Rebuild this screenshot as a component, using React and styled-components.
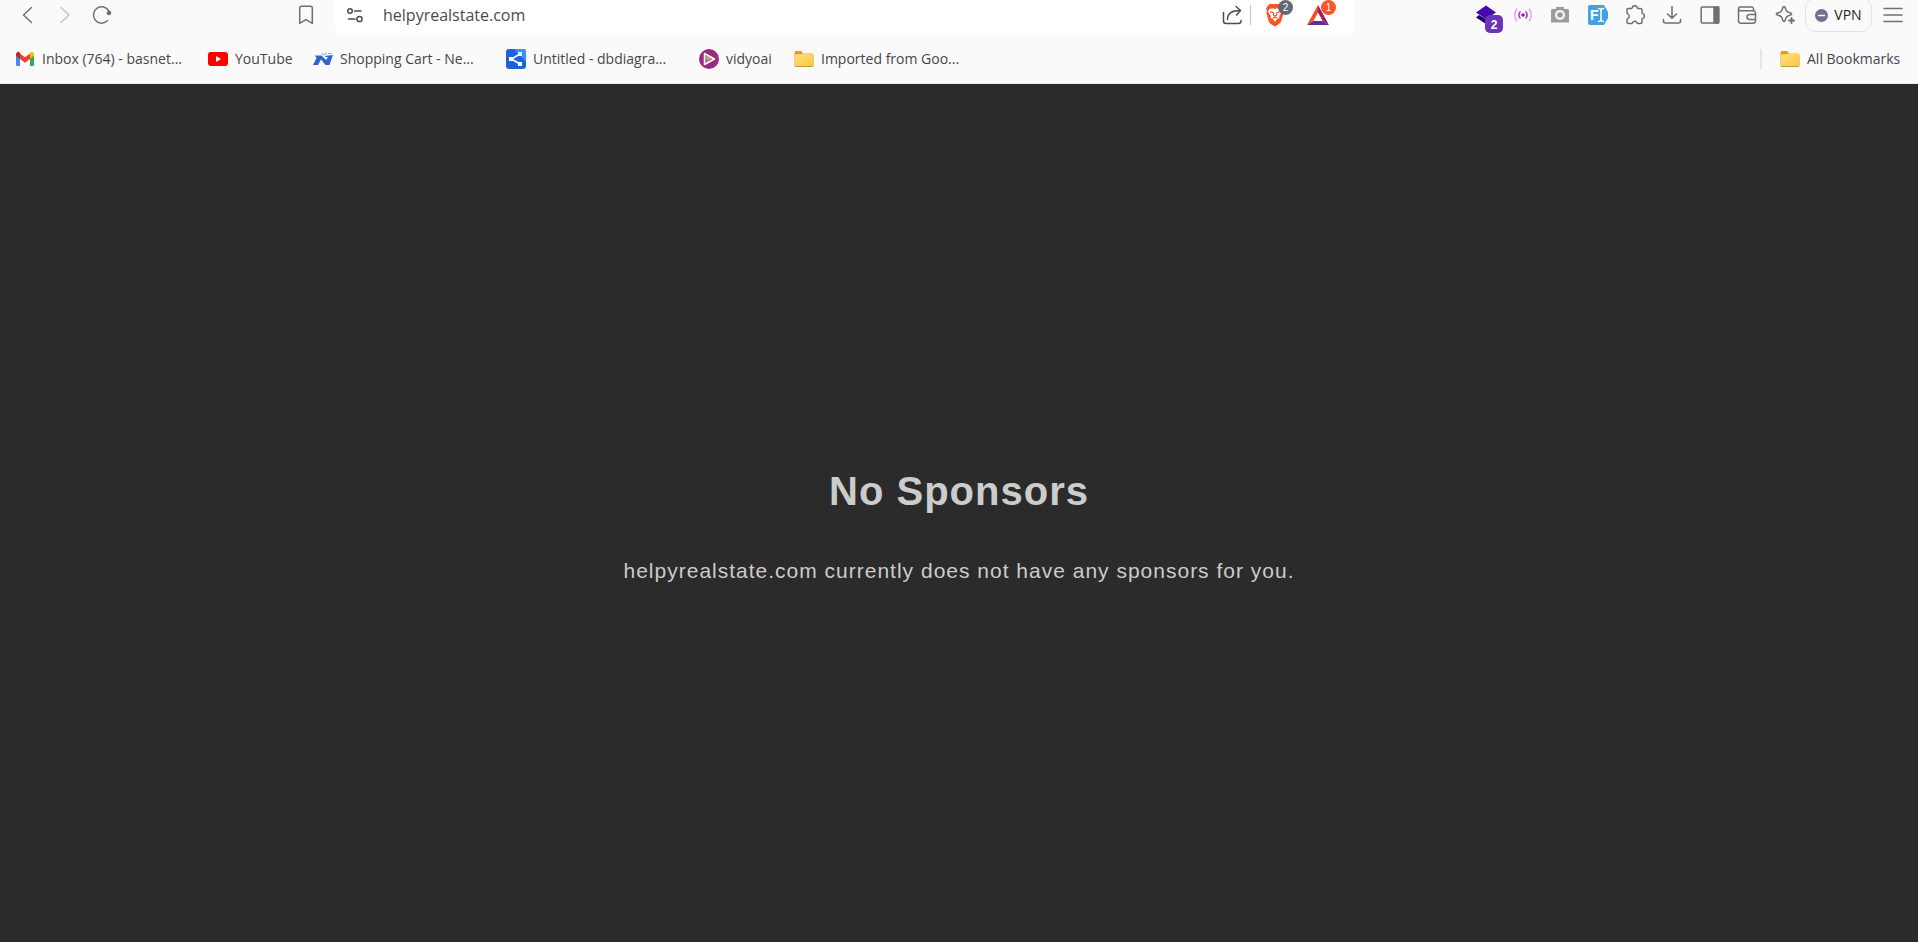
import React from 'react';
import styled, { createGlobalStyle } from 'styled-components';

const GlobalStyle = createGlobalStyle`
  * { box-sizing: border-box; }
  body { margin: 0; background: #2b2b2b; }
`;

const uiFont = '"Open Sans", "Noto Sans", sans-serif';

const Page = styled.div`
  display: flex;
  flex-direction: column;
  min-height: 100vh;
  font-family: ${uiFont};
`;

const Chrome = styled.header`
  background: #fafafa;
  border-bottom: 1px solid #ebebeb;
  overflow: hidden;
`;

const Toolbar = styled.div`
  display: flex;
  height: 35px;
`;

const NavGroup = styled.nav`
  display: flex;
  align-items: center;
  width: 335px;
  height: 30px;
  padding: 0 11px 0 9px;
`;

const IconButton = styled.button`
  position: relative;
  display: flex;
  align-items: center;
  justify-content: center;
  flex: none;
  width: 37px;
  height: 30px;
  margin: 0;
  margin-left: ${(p) => (p.$push ? 'auto' : '0')};
  padding: 0;
  border: 0;
  background: none;
  color: ${(p) => p.$color || '#6f7073'};

  svg { display: block; }
`;

const AddressBar = styled.div`
  display: flex;
  flex: 1;
  min-width: 0;
  height: 35px;
  padding: 0 19px 5px 1px;
  align-items: center;
  border-radius: 0 0 12px 12px;
  background: #fff;
`;

const AddressInput = styled.input`
  flex: 1;
  min-width: 0;
  height: 26px;
  margin: 0 0 0 10px;
  padding: 0;
  border: 0;
  outline: 0;
  background: none;
  color: #4a4b50;
  font: 400 16px/26px ${uiFont};
`;

const Divider = styled.span`
  flex: none;
  width: ${(p) => p.$width || 1}px;
  height: 20px;
  background: ${(p) => p.$color || '#c4c4c6'};
`;

const Shields = styled.div`
  display: flex;
  gap: 6px;
  margin-left: 5px;
`;

const Badge = styled.span`
  position: absolute;
  top: 0;
  right: 0;
  width: 15px;
  height: 15px;
  border-radius: 8px;
  background: ${(p) => p.$bg};
  color: #fff;
  font-size: 10px;
  line-height: 16px;
  text-align: center;
`;

const CountBadge = styled(Badge)`
  top: 15px;
  right: 1px;
  width: 18px;
  height: 18px;
  border-radius: 5px;
  font-size: 12px;
  font-weight: 600;
  line-height: 20px;
`;

const ToolGroup = styled.div`
  display: flex;
  align-items: center;
  justify-content: flex-end;
  gap: 2px;
  width: 563px;
  height: 30px;
  padding-right: 7px;
`;

const Extensions = styled.div`
  display: flex;
  justify-content: space-between;
  width: 336px;
`;

const VpnButton = styled.button`
  display: flex;
  align-items: center;
  justify-content: center;
  gap: 6px;
  flex: none;
  width: 67px;
  height: 34px;
  padding: 0;
  border: 1px solid #e3e3ea;
  border-radius: 10px;
  background: none;
  color: #1d1f25;
  font: 400 14px/20px ${uiFont};
`;

const BookmarkBar = styled.nav`
  display: flex;
  align-items: center;
  gap: 21px;
  height: 48px;
  padding: 0 15px;
`;

const Bookmark = styled.a`
  display: flex;
  align-items: center;
  gap: 7px;
  flex: none;
  color: #45464c;
  font-size: 14px;
  line-height: 20px;
  text-decoration: none;
  white-space: nowrap;

  svg { display: block; flex: none; }
`;

const BookmarkLabel = styled.span`
  width: ${(p) => (p.$width ? `${p.$width}px` : 'auto')};
`;

const BookmarkEnd = styled.div`
  display: flex;
  align-items: center;
  gap: 18px;
  margin-left: auto;
`;

const Content = styled.main`
  display: flex;
  flex: 1;
  flex-direction: column;
  align-items: center;
  justify-content: center;
  gap: 45px;
  padding-top: 25px;
  background: #2b2b2b;
  color: #ccc;
  font-family: "Liberation Sans", Arial, sans-serif;
  text-align: center;
`;

const Title = styled.h1`
  margin: 0;
  font-size: 40px;
  line-height: 46px;
  letter-spacing: 1px;
`;

const Message = styled.p`
  margin: 0;
  font-size: 21px;
  line-height: 24px;
  letter-spacing: 1px;
`;

const Icon = ({ size = 20, width, height, children, stroke = 'currentColor', sw = 1.5 }) => (
  <svg
    width={width || size}
    height={height || size}
    viewBox={`0 0 ${width || size} ${height || size}`}
    fill="none"
    stroke={stroke}
    strokeWidth={sw}
    strokeLinecap="round"
    strokeLinejoin="round"
    aria-hidden="true"
  >
    {children}
  </svg>
);

const BackIcon = () => <Icon><path d="M13.5 2.5 5.5 10l8 7.500" /></Icon>;
const ForwardIcon = () => <Icon><path d="M6 2.500 14 10l-8 7.500" /></Icon>;
const ReloadIcon = () => (
  <Icon>
    <path d="M15.600 15.600A8.200 8.200 0 1 1 17 6.300" />
    <circle cx="17" cy="8" r="2.300" fill="currentColor" stroke="none" />
  </Icon>
);
const BookmarkIcon = () => (
  <Icon><path d="M3.700 3a1.700 1.700 0 0 1 1.700-1.700h9.200A1.700 1.700 0 0 1 16.300 3v15.400L10 14.600l-6.300 3.800z" /></Icon>
);
const SiteIcon = () => (
  <Icon>
    <circle cx="5" cy="6" r="2.300" />
    <path d="M9.500 6H16M3.500 14h6.500" />
    <circle cx="14.500" cy="14" r="2.600" />
  </Icon>
);
const ShareIcon = () => (
  <Icon>
    <path d="M1.500 7.500V16A2.500 2.500 0 0 0 4 18.500h12.500a2.500 2.500 0 0 0 2.500-2.500v-.5M5.500 14.500c0-6 4-9 12.500-9M14 1.500l4.500 4-4 4.500" />
  </Icon>
);
const BraveIcon = () => (
  <Icon width={20} height={24} stroke="none">
    <path fill="#fb542b" d="M4.500 1h11l2.300 2.600 1.200 2-1 2.400.6 2-2.400 8.500c-.8 2-3.200 3.200-6.200 5.100-3-1.900-5.400-3.100-6.200-5.100L1.400 10 2 8 1 5.600l1.200-2z" />
    <path fill="#fff" d="m4.200 6 3.600-.7L10 6l2.200-.7 3.600.7 1.200 2.800-2.800 4.200.2 2-2.200 1-2.200 2.700L7.800 16l-2.200-1 .2-2L3 8.800z" />
    <path stroke="#fb542b" strokeWidth="1.200" d="m5.500 8.900 2.500.7M14.500 8.900l-2.500.7M8.700 10.500 8.300 12l1.700 1 1.700-1-.4-1.500M8 15l2-1 2 1" />
  </Icon>
);
const RewardsIcon = () => (
  <Icon width={22} height={20} stroke="none">
    <path fill="#ff4724" d="M11 0 0 20l6.300-4L11 7.600z" />
    <path fill="#9e1f63" d="M11 0v7.600l4.700 8.400 6.300 4z" />
    <path fill="#662d91" d="M6.300 16 0 20h22l-6.300-4z" />
  </Icon>
);
const LayersIcon = () => (
  <Icon size={20} stroke="none">
    <path fill="#240070" d="M0 12.500 3 10l7 4 7-4 3 2.500L10 19z" />
    <path fill="#4608ad" d="M10 .5 20 7.500 10 14 0 7.500z" />
  </Icon>
);
const BroadcastIcon = () => (
  <Icon width={18} height={14} sw={1.6}>
    <circle cx="9" cy="7" r="1.800" fill="#a318b0" stroke="none" />
    <path stroke="#b43fc0" d="M6 4a5 5 0 0 0 0 6M12 4a5 5 0 0 1 0 6" />
    <path stroke="#e3a3ea" d="M2.700 1.300a9.500 9.500 0 0 0 0 11.400M15.300 1.300a9.500 9.500 0 0 1 0 11.400" />
  </Icon>
);
const CameraIcon = () => (
  <Icon stroke="none">
    <path fill="#9b9b9b" fillRule="evenodd" d="M3 4h3V2h8v2h3.500A1.500 1.500 0 0 1 19 5.500v12H1v-12A1.500 1.500 0 0 1 3 4z" />
    <circle cx="10" cy="10" r="5" fill="#fafafa" />
    <circle cx="10" cy="10" r="2.800" fill="#9b9b9b" />
  </Icon>
);
const FontIcon = () => (
  <Icon stroke="none">
    <path fill="#43a3e0" d="M2 0h14l4 7v6l-4 7H2a2 2 0 0 1-2-2V2a2 2 0 0 1 2-2z" />
    <text x="2" y="15" fill="#fff" fontFamily="Liberation Sans, sans-serif" fontSize="14" fontWeight="700">F</text>
    <path stroke="#fff" strokeWidth="1.500" d="M10.500 3.500c2 0 2.500.5 2.500 2 0-1.500.5-2 2.500-2M13 5v10M10.500 16.500c2 0 2.500-.5 2.500-2 0 1.500.5 2 2.500 2" />
  </Icon>
);
const PuzzleIcon = () => (
  <Icon>
    <path d="M3 3.500h3.500c.3 0 .5-.2.6-.6a2.700 2.700 0 0 1 5.300 0c0 .4.300.6.600.6h2.500a1.500 1.500 0 0 1 1.500 1.500v2.700c0 .4.300.6.600.700a2.600 2.600 0 0 1 0 5c-.4 0-.6.300-.6.700V17a1.500 1.500 0 0 1-1.500 1.500h-2.700c-.4 0-.6-.3-.7-.6a2.500 2.500 0 0 0-4.700 0c-.1.300-.4.600-.8.600H3.500A1.500 1.500 0 0 1 2 17v-2.600c0-.4.300-.7.600-.800a2.500 2.500 0 0 0 0-4.700C2.300 8.700 2 8.500 2 8.100V4.500a1 1 0 0 1 1-1z" />
  </Icon>
);
const DownloadIcon = () => (
  <Icon><path d="M10 1.500V13M5.500 9 10 13.300 14.500 9M1.500 14.500v1.500a2 2 0 0 0 2 2h13a2 2 0 0 0 2-2v-1.500" /></Icon>
);
const SidebarIcon = () => (
  <Icon>
    <rect x="1.200" y="2" width="17.600" height="16" rx="1" />
    <path d="M14 2h4.500v16H14z" fill="currentColor" />
  </Icon>
);
const WalletIcon = () => (
  <Icon>
    <path d="M1.500 4v12A2.200 2.200 0 0 0 3.700 18.200h12.600a2.200 2.200 0 0 0 2.200-2.200V8a2.200 2.200 0 0 0-2.200-2.200H3.500a1.900 1.900 0 0 1 0-3.800h11a2 2 0 0 1 2 2v1.500" />
    <path d="M18.500 9.500h-6a2.500 2.500 0 0 0 0 5h6" />
  </Icon>
);
const SparkleIcon = () => (
  <Icon>
    <path d="M9 1.500c.8 0 1 .5 1.200 1.300.8 3.200 1.600 4.200 5.300 5.200 1.600.4 1.600 1.600 0 2-3.700 1-4.500 2-5.300 5.200-.4 1.700-2 1.700-2.400 0C7 12 6.200 11 2.500 10 .9 9.600.9 8.400 2.500 8 6.200 7 7 6 7.800 2.800 8 2 8.200 1.500 9 1.500z" />
    <path d="M16.500 13v5M14 15.500h5" strokeWidth="2" />
  </Icon>
);
const MenuIcon = () => <Icon><path d="M1 3.500h18M1 10h18M1 16.500h18" /></Icon>;
const VpnIcon = () => (
  <Icon size={13} stroke="none">
    <circle cx="6.500" cy="6.500" r="6.500" fill="#6b7094" />
    <path d="M3.500 6.500h6" stroke="#fff" strokeWidth="1.500" />
  </Icon>
);

const MailLogo = () => (
  <Icon stroke="none">
    <path fill="#4285f4" d="M1 5v10.700A1.300 1.300 0 0 0 2.300 17H5V8.500z" />
    <path fill="#34a853" d="M15 17h2.700a1.300 1.300 0 0 0 1.300-1.300V5l-4 3.500z" />
    <path fill="#fbbc04" d="M15 4.500V10l4-3.200V5.200c0-2-2.300-3-3.700-1.900z" />
    <path fill="#ea4335" d="M5 10V4.500l5 3.800 5-3.800V10l-5 3.800z" />
    <path fill="#c5221f" d="M1 5.200v1.600L5 10V4.500l-.3-1.200C3.300 2.200 1 3.200 1 5.200z" />
  </Icon>
);
const YouTubeLogo = () => (
  <Icon stroke="none">
    <rect y="3" width="20" height="14" rx="3" fill="#f00" />
    <path fill="#fff" d="m8 7 5 3-5 3z" />
  </Icon>
);
const CartLogo = () => (
  <Icon stroke="none">
    <path fill="#3264cf" d="M0 16 3.500 9 2 6.500h6.500L13 11l2-3h-3l1-1.200 7-.8-3.500 10h-4L8 10.500 5 16z" />
    <path stroke="#8fabec" strokeWidth="1.200" d="m9.500 5 1.500 1M12.500 4l.5 1.500M15.500 4.500h3" />
  </Icon>
);
const DiagramLogo = () => (
  <Icon stroke="none">
    <rect width="20" height="20" rx="3" fill="#1e62d8" />
    <path fill="#3f8bff" d="M8 0h9a3 3 0 0 1 3 3v10z" />
    <path stroke="#fff" strokeWidth="1.500" d="M14 5 5.500 10 14 15" />
    <path fill="#fff" d="M3 8h4v4H3zM12 3h4v4h-4zM12 13h4v4h-4z" />
  </Icon>
);
const PlayLogo = () => (
  <Icon stroke="none">
    <circle cx="10" cy="10" r="10" fill="#9a2a7e" />
    <path fill="#c75bab" stroke="#fff" strokeWidth="1.500" d="M5.500 4.500v11L15.500 10z" />
    <path fill="#a9c75a" d="M7.500 6.500v4l6-.5z" />
  </Icon>
);
const FolderLogo = () => (
  <Icon stroke="none">
    <defs>
      <linearGradient id="folder" x1="0" y1="0" x2="1" y2="1">
        <stop offset="0" stopColor="#ffe083" />
        <stop offset="1" stopColor="#fbc83a" />
      </linearGradient>
    </defs>
    <path fill="#dfa016" d="M.5 3.500A1.500 1.500 0 0 1 2 2h5l2 2h9v5H.500z" />
    <path fill="#c99b35" d="M.5 6h19v10.500a1.500 1.500 0 0 1-1.500 1.500H2A1.500 1.500 0 0 1 .500 16.500z" />
    <path fill="url(#folder)" d="M.5 5.500 8 5l1.500-1H18a1.500 1.500 0 0 1 1.500 1.500v10A1.500 1.500 0 0 1 18 17H2A1.500 1.500 0 0 1 .500 15.500z" />
  </Icon>
);

const bookmarks = [
  { label: 'Inbox (764) - basnet...', Logo: MailLogo, width: 145 },
  { label: 'YouTube', Logo: YouTubeLogo, width: 57 },
  { label: 'Shopping Cart - Ne...', Logo: CartLogo, width: 145 },
  { label: 'Untitled - dbdiagra...', Logo: DiagramLogo, width: 145 },
  { label: 'vidyoai', Logo: PlayLogo, width: 47 },
  { label: 'Imported from Goo...', Logo: FolderLogo, width: 145 },
];

const tools = [
  { label: 'Broadcast', Glyph: BroadcastIcon },
  { label: 'Screenshot', Glyph: CameraIcon },
  { label: 'Fonts', Glyph: FontIcon },
  { label: 'Extensions', Glyph: PuzzleIcon },
  { label: 'Downloads', Glyph: DownloadIcon },
  { label: 'Sidebar', Glyph: SidebarIcon },
  { label: 'Wallet', Glyph: WalletIcon },
  { label: 'Assistant', Glyph: SparkleIcon },
];

export default function App() {
  return (
    <Page>
      <GlobalStyle />
      <Chrome>
        <Toolbar>
          <NavGroup aria-label="Navigation">
            <IconButton aria-label="Back"><BackIcon /></IconButton>
            <IconButton aria-label="Forward" $color="#c3c3c5"><ForwardIcon /></IconButton>
            <IconButton aria-label="Reload"><ReloadIcon /></IconButton>
            <IconButton aria-label="Bookmark this page" $push><BookmarkIcon /></IconButton>
          </NavGroup>
          <AddressBar>
            <IconButton aria-label="Site information" $color="#4b4c50"><SiteIcon /></IconButton>
            <AddressInput aria-label="Address" defaultValue="helpyrealstate.com" />
            <IconButton aria-label="Share" $color="#4b4c50"><ShareIcon /></IconButton>
            <Divider />
            <Shields>
              <IconButton aria-label="Shields">
                <BraveIcon />
                <Badge $bg="#636775">2</Badge>
              </IconButton>
              <IconButton aria-label="Rewards">
                <RewardsIcon />
                <Badge $bg="#fb542b">1</Badge>
              </IconButton>
            </Shields>
          </AddressBar>
          <ToolGroup>
            <Extensions>
              <IconButton aria-label="Layers">
                <LayersIcon />
                <CountBadge $bg="#6b35b8">2</CountBadge>
              </IconButton>
              {tools.map(({ label, Glyph }) => (
                <IconButton key={label} aria-label={label}><Glyph /></IconButton>
              ))}
            </Extensions>
            <VpnButton><VpnIcon />VPN</VpnButton>
            <IconButton aria-label="Menu"><MenuIcon /></IconButton>
          </ToolGroup>
        </Toolbar>
        <BookmarkBar aria-label="Bookmarks">
          {bookmarks.map(({ label, Logo, width }) => (
            <Bookmark key={label} href="#">
              <Logo />
              <BookmarkLabel $width={width}>{label}</BookmarkLabel>
            </Bookmark>
          ))}
          <BookmarkEnd>
            <Divider $width={2} $color="#e6e7ee" />
            <Bookmark href="#">
              <FolderLogo />
              <BookmarkLabel $width={96}>All Bookmarks</BookmarkLabel>
            </Bookmark>
          </BookmarkEnd>
        </BookmarkBar>
      </Chrome>
      <Content>
        <Title>No Sponsors</Title>
        <Message>helpyrealstate.com currently does not have any sponsors for you.</Message>
      </Content>
    </Page>
  );
}
